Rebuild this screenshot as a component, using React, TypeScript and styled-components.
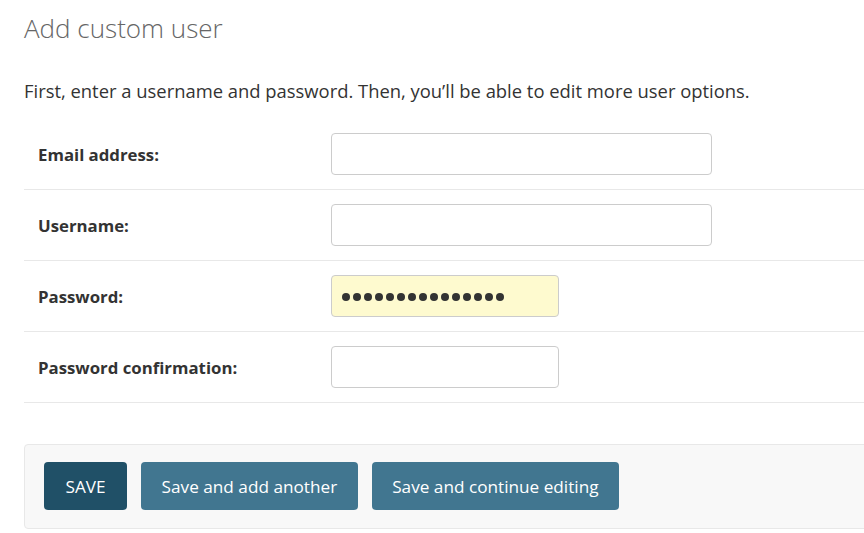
import React from "react";
import styled, { createGlobalStyle } from "styled-components";

const Global = createGlobalStyle`
  html, body { margin: 0; padding: 0; background: #fff; overflow: hidden; }
  body { font-family: "Open Sans", "Noto Sans", sans-serif; color: #333; }
  * { box-sizing: border-box; }
`;

const Page = styled.div`
  padding: 0 0 0 24px;
  width: 864px;
`;

const Title = styled.h1`
  margin: 0;
  padding-top: 10px;
  height: 50px;
  font-size: 26px;
  font-weight: 300;
  color: #666;
  line-height: 36px;
`;

const Intro = styled.p`
  margin: 21px 0 0;
  font-size: 18.4px;
  line-height: 40px;
  color: #333;
`;

const Fieldset = styled.div`
  margin-top: 8px;
  display: flex;
  flex-direction: column;
`;

const Row = styled.div`
  display: flex;
  align-items: center;
  height: 71px;
  padding: 0 0 0 14px;
  border-bottom: 1px solid #e8e8e8;
`;

const Label = styled.label`
  width: 293px;
  font-size: 16.8px;
  font-weight: 700;
  color: #333;
`;

const Input = styled.div<{ $w: number; $filled?: boolean }>`
  width: ${(p) => p.$w}px;
  height: 42px;
  border: 1px solid #ccc;
  border-radius: 4px;
  background: ${(p) => (p.$filled ? "#fefacf" : "#fff")};
  display: flex;
  align-items: center;
  padding: 2px 0 0 10px;
  gap: 3px;
`;

const Dot = styled.span`
  width: 8px;
  height: 8px;
  border-radius: 50%;
  background: #333;
`;

const SubmitRow = styled.div`
  margin-top: 41px;
  margin-right: -8px;
  height: 85px;
  background: #f8f8f8;
  border: 1px solid #e8e8e8;
  border-radius: 4px;
  display: flex;
  align-items: flex-start;
  padding: 17px 0 0 19px;
  gap: 14px;
`;

const Button = styled.button<{ $primary?: boolean }>`
  height: 48px;
  border: none;
  border-radius: 4px;
  background: ${(p) => (p.$primary ? "#205067" : "#417690")};
  color: #fff;
  font-family: "Open Sans", "Noto Sans", sans-serif;
  font-size: 17.2px;
  padding: 0 ${(p) => (p.$primary ? 21.5 : 20.5)}px;
  cursor: pointer;
`;

export default function App() {
  return (
    <>
      <Global />
      <Page>
        <Title>Add custom user</Title>
        <Intro>First, enter a username and password. Then, you’ll be able to edit more user options.</Intro>
        <Fieldset>
          <Row>
            <Label>Email address:</Label>
            <Input $w={381} />
          </Row>
          <Row>
            <Label>Username:</Label>
            <Input $w={381} />
          </Row>
          <Row>
            <Label>Password:</Label>
            <Input $w={228} $filled>
              {Array.from({ length: 15 }).map((_, i) => (
                <Dot key={i} />
              ))}
            </Input>
          </Row>
          <Row>
            <Label>Password confirmation:</Label>
            <Input $w={228} />
          </Row>
        </Fieldset>
        <SubmitRow>
          <Button $primary>SAVE</Button>
          <Button>Save and add another</Button>
          <Button>Save and continue editing</Button>
        </SubmitRow>
      </Page>
    </>
  );
}
